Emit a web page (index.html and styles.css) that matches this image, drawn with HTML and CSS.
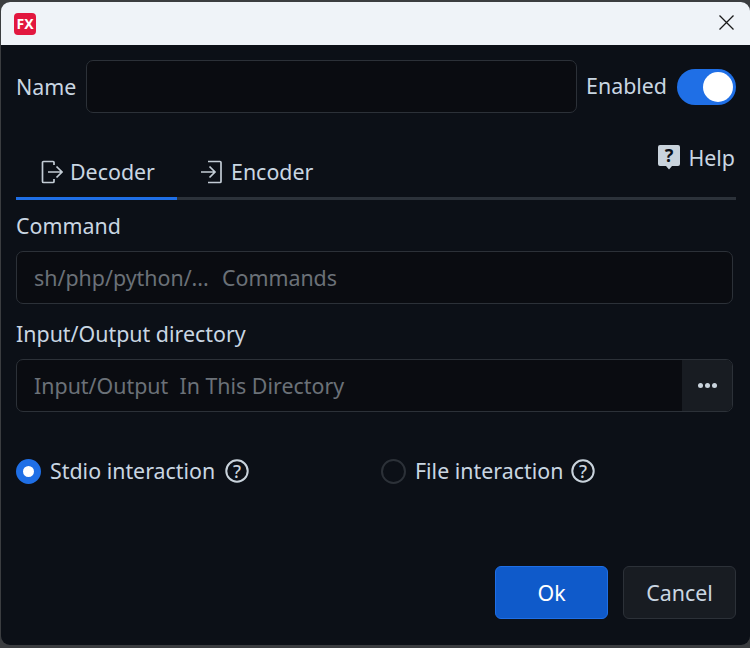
FILE: index.html
```html
<!DOCTYPE html>
<html lang="en">
<head>
<meta charset="utf-8">
<title>FX</title>
<link rel="stylesheet" href="styles.css">
</head>
<body>
<div class="window">
  <header class="titlebar">
    <div class="logo">FX</div>
    <svg class="close" width="15" height="15" viewBox="0 0 15 15"><path d="M.5 .5L14.500 14.500M14.500 .5L.5 14.500" stroke="#1a1a1a" stroke-width="1.300" fill="none"/></svg>
  </header>
  <main class="content">
    <div class="name-row">
      <label class="text">Name</label>
      <div class="input name-input"></div>
      <span class="text enabled">Enabled</span>
      <div class="toggle"><div class="knob"></div></div>
    </div>
    <div class="tabs">
      <div class="tab active">
        <svg width="22" height="24" viewBox="0 0 22 24" fill="none" stroke="#c3ccd5" stroke-width="1.700"><path d="M13 5V2.500a1 1 0 0 0-1-1H2.500a1 1 0 0 0-1 1V21.500a1 1 0 0 0 1 1H12a1 1 0 0 0 1-1V19"/><path d="M7 12H21M15.500 6.500L21 12L15.500 17.500"/></svg>
        <span>Decoder</span>
      </div>
      <div class="tab">
        <svg width="22" height="24" viewBox="0 0 22 24" fill="none" stroke="#c3ccd5" stroke-width="1.700"><path d="M7 1.500H19a1 1 0 0 1 1 1V21.500a1 1 0 0 1-1 1H7"/><path d="M0 12H14M8.500 6.500L14 12L8.500 17.500"/></svg>
        <span>Encoder</span>
      </div>
      <div class="help">
        <svg class="help-icon" width="22" height="28" viewBox="0 -3 22 28"><path d="M2 0H20a2 2 0 0 1 2 2V19a2 2 0 0 1-2 2H14L11 24.500L8 21H2a2 2 0 0 1-2-2V2a2 2 0 0 1 2-2Z" fill="#c9d3dc"/><text x="11" y="17" text-anchor="middle" class="help-mark">?</text></svg>
        <span>Help</span>
      </div>
    </div>
    <label class="text field-label">Command</label>
    <div class="input field"><span class="placeholder command-hint">sh/php/python/...&nbsp; Commands</span></div>
    <label class="text field-label second">Input/Output directory</label>
    <div class="input field with-button">
      <span class="placeholder">Input/Output&nbsp; In This Directory</span>
      <div class="browse"><i></i><i></i><i></i></div>
    </div>
    <div class="radios">
      <div class="radio-item">
        <div class="radio on"></div>
        <span class="text">Stdio interaction</span>
        <svg class="q" width="24" height="24" viewBox="0 0 24 24"><circle cx="12" cy="12" r="10.700" fill="none" stroke="#c9d3dc" stroke-width="2"/><text x="12" y="18.500" text-anchor="middle" class="q-mark">?</text></svg>
      </div>
      <div class="radio-item">
        <div class="radio"></div>
        <span class="text">File interaction</span>
        <svg class="q" width="24" height="24" viewBox="0 0 24 24"><circle cx="12" cy="12" r="10.700" fill="none" stroke="#c9d3dc" stroke-width="2"/><text x="12" y="18.500" text-anchor="middle" class="q-mark">?</text></svg>
      </div>
    </div>
    <div class="actions">
      <button class="btn primary">Ok</button>
      <button class="btn">Cancel</button>
    </div>
  </main>
</div>
</body>
</html>
```
FILE: styles.css
```css
* { box-sizing: border-box; }
html, body { margin: 0; height: 100%; background: #3b3d40; }
body { width: 750px; height: 648px; overflow: hidden; font-family: "Noto Sans", "Noto Sans CJK SC", sans-serif; font-size: 21.400px; color: #c9d6e2; }
.window { margin: 2px 0 0 1px; width: 749px; height: 643px; border-radius: 9px; overflow: hidden; background: #0c1017; display: flex; flex-direction: column; }
.titlebar { height: 43px; flex: none; background: #eff3f8; display: flex; align-items: center; justify-content: space-between; padding: 0 16px 0 13px; }
.logo { width: 22px; height: 22px; border-radius: 4px; background: #e2173f; color: #fff; font-size: 14px; font-weight: 700; line-height: 22px; text-align: center; }
.close { margin-top: -3px; }
.content { flex: 1; padding: 15px 14px 26px 15px; display: flex; flex-direction: column; }
.text { line-height: 28px; white-space: nowrap; }
.name-row { display: flex; align-items: center; height: 53px; }
.input { background: #0a0c11; border: 1px solid #2c3138; border-radius: 7px; }
.name-input { width: 491px; height: 53px; margin-left: 10px; }
.enabled { margin-left: 9px; position: relative; top: -1px; }
.toggle { width: 59px; height: 36px; border-radius: 18px; background: #1f6fe6; margin: 1px 0 0 10px; display: flex; align-items: center; justify-content: flex-end; padding-right: 3px; }
.knob { width: 30px; height: 30px; border-radius: 50%; background: #fff; }
.tabs { display: flex; height: 87px; border-bottom: 3px solid #2c323a; width: 720px; align-items: flex-end; }
.tab { display: flex; align-items: center; gap: 7px; height: 45px; padding: 0 0 8px 25px; margin-bottom: -3px; border-bottom: 3px solid transparent; line-height: 28px; flex: none; }
.tab + .tab { padding-left: 24px; gap: 8px; }
.tab.active { border-bottom-color: #1f6fe6; width: 161px; }
.help { margin-left: auto; margin-right: 1px; align-self: flex-start; margin-top: 31px; display: flex; align-items: center; gap: 8px; line-height: 28px; }
.help-icon { margin-top: -5px; }
.help-mark { font-size: 18px; font-weight: 700; fill: #0c1017; font-family: "Noto Sans", sans-serif; }
.field-label { display: block; margin-top: 12px; height: 28px; }
.field-label.second { margin-top: 16px; }
.field { width: 717px; height: 53px; margin-top: 11px; display: flex; align-items: center; padding-left: 17px; flex: none; }
.placeholder { color: #6b7178; white-space: nowrap; line-height: 28px; }
.command-hint { word-spacing: 1px; }
.with-button { justify-content: space-between; overflow: hidden; }
.browse { width: 50px; height: 100%; background: #181c22; display: flex; align-items: center; justify-content: center; gap: 2px; }
.browse i { width: 5px; height: 5px; border-radius: 50%; background: #c9d3dc; }
.radios { display: flex; margin-top: 46px; height: 26px; align-items: center; }
.radio-item { display: flex; align-items: center; width: 365px; flex: none; }
.radio { width: 25px; height: 25px; border-radius: 50%; border: 2px solid #2c3138; margin-right: 9px; flex: none; }
.radio.on { background: #fff; border: 7px solid #1f6fe6; }
.q { margin-left: 8px; flex: none; }
.radio-item:first-child .q { margin-left: 10px; }
.q-mark { font-size: 18px; font-weight: 500; fill: #c9d3dc; font-family: "Noto Sans", sans-serif; }
.actions { display: flex; justify-content: flex-end; gap: 15px; margin-top: auto; }
.btn { width: 113px; height: 53px; border-radius: 6px; border: 1px solid #2c3138; background: #181c22; color: #c9d6e2; font: inherit; padding: 0; }
.btn.primary { background: #0f5aca; border-color: #1f6fe6; color: #fff; }
```
